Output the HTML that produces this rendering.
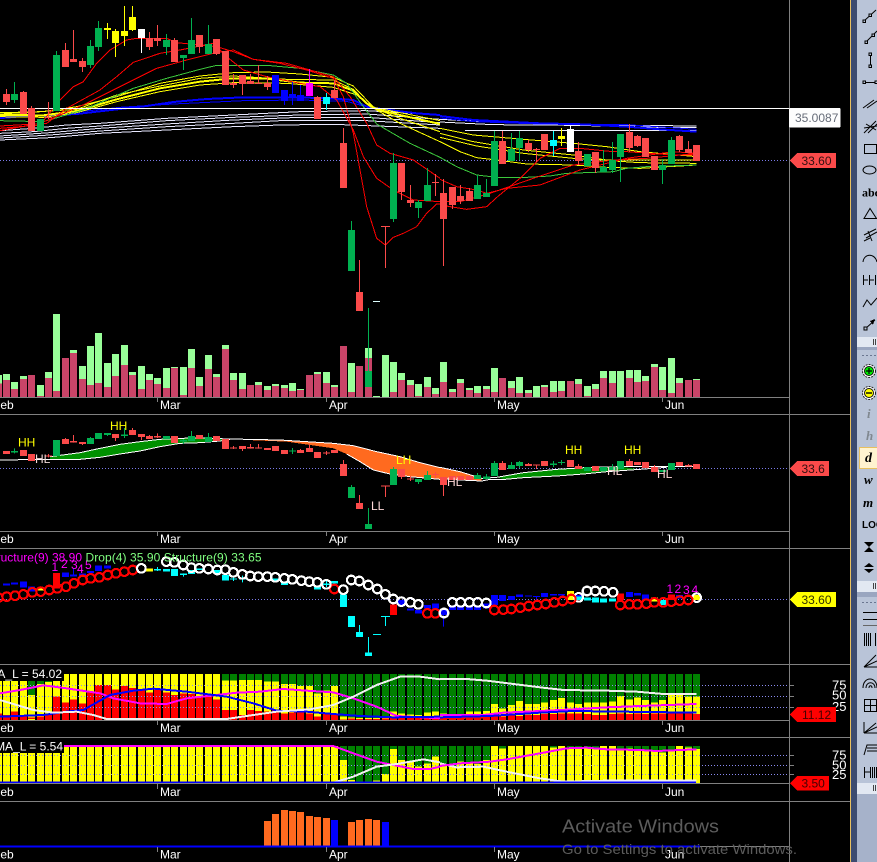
<!DOCTYPE html>
<html><head><meta charset="utf-8"><style>
html,body{margin:0;padding:0;background:#000;width:877px;height:862px;overflow:hidden}
svg{display:block}
text{font-family:"Liberation Sans",sans-serif;font-size:12px}
.w{fill:none;stroke-width:1}
.b{fill:none;stroke-width:7}
.l{fill:none;stroke-width:3}
</style></head><body>
<svg width="877" height="862" viewBox="0 0 877 862" xmlns="http://www.w3.org/2000/svg" shape-rendering="crispEdges">
<defs><path id="bars" d="M-1.5 0V1M6.5 0V1M14.5 0V1M23.5 0V1M31.5 0V1M40.5 0V1M48.5 0V1M56.5 0V1M65.5 0V1M73.5 0V1M82.5 0V1M90.5 0V1M98.5 0V1M107.5 0V1M115.5 0V1M124.5 0V1M132.5 0V1M141.5 0V1M149.5 0V1M157.5 0V1M166.5 0V1M174.5 0V1M183.5 0V1M191.5 0V1M199.5 0V1M208.5 0V1M216.5 0V1M225.5 0V1M233.5 0V1M242.5 0V1M250.5 0V1M258.5 0V1M267.5 0V1M275.5 0V1M284.5 0V1M292.5 0V1M300.5 0V1M309.5 0V1M317.5 0V1M326.5 0V1M334.5 0V1M343.5 0V1M351.5 0V1M359.5 0V1M368.5 0V1M376.5 0V1M385.5 0V1M393.5 0V1M401.5 0V1M410.5 0V1M418.5 0V1M427.5 0V1M435.5 0V1M443.5 0V1M452.5 0V1M460.5 0V1M469.5 0V1M477.5 0V1M486.5 0V1M494.5 0V1M502.5 0V1M511.5 0V1M519.5 0V1M528.5 0V1M536.5 0V1M544.5 0V1M553.5 0V1M561.5 0V1M570.5 0V1M578.5 0V1M587.5 0V1M595.5 0V1M603.5 0V1M612.5 0V1M620.5 0V1M629.5 0V1M637.5 0V1M645.5 0V1M654.5 0V1M662.5 0V1M671.5 0V1M679.5 0V1M688.5 0V1M696.5 0V1"/></defs>
<rect width="877" height="862" fill="#000"/>

<!-- dotted price lines -->
<path d="M0 160.5H789M0 468.5H789M0 599.5H789" stroke="#7a7ae8" stroke-dasharray="1 2" fill="none"/>

<!-- main MAs, left part -->
<g transform="scale(.33333)">
<path class="l" stroke="#e8e8ff" d="M0 392L100 385L200 375L300 370L500 355L700 345L900 335L1100 332L1320 345M0 400L100 395L200 385L300 378L500 362L700 352L900 345L1100 342L1320 358M0 408L150 398L300 385L500 372L700 360L900 352L1100 352L1320 368M0 414L150 405L300 393L500 380L700 370L840 362L1100 362L1320 375M0 420L150 413L300 400L500 390L700 380L840 375L1000 373L1320 385"/>
<path fill="none" stroke="#00f" stroke-width="6" d="M0 352L230 342L360 327L440 318L520 306L620 297L730 292L900 292L1000 296L1060 300L1100 320L1150 328L1250 340L1320 345"/>
<path class="l" stroke="#00f" d="M0 356L230 336L360 322L520 312L730 302L900 300L1040 304L1090 318"/>
<path class="l" stroke="#ff0" d="M0 338L130 335L230 320L350 290L480 250L600 228L700 218L800 216L900 222L1000 232L1060 258L1100 300L1130 330L1200 370L1320 425"/>
<path fill="none" stroke="#ff0" stroke-width="6" d="M0 345L130 346L230 333L350 298L480 265L600 245L700 235L800 236L900 248L1000 250L1060 272L1100 310L1130 328L1200 345L1320 372"/>
<path class="l" stroke="#ff0" d="M0 350L130 352L230 338L350 305L480 275L600 255L700 248L860 250L1000 262L1070 285L1110 320L1200 355L1320 395M0 342L230 328L350 285L480 258L600 235L700 228L860 238L1000 240L1060 268L1110 320L1200 338L1320 362"/>
<path class="l" stroke="#3cc83c" d="M0 362L130 365L250 330L330 295L400 265L500 235L600 208L650 196L800 196L900 205L1000 225L1040 250L1090 320L1130 372L1230 430L1320 472"/>
<path class="l" stroke="#f00" d="M0 385L120 375L180 300L220 260L250 245L290 190L330 150L380 120L410 115L500 115L530 128L600 135L650 140L700 155L760 178L840 190L920 210L1000 235L1030 290L1060 400L1100 620L1130 715L1156 735L1180 712L1210 700L1250 680L1280 640L1310 612L1320 612"/>
<path class="l" stroke="#f00" d="M0 378L140 370L200 325L300 270L350 230L400 187L480 160L540 150L640 130L680 170L730 210L800 230L900 250L960 260L1010 300L1060 390L1090 470L1130 535L1180 570L1240 600L1320 605"/>
<path class="l" stroke="#f00" d="M0 392L120 370L180 345L260 310L340 270L400 240L470 205L560 180L640 160L700 150L760 178L860 190L1000 230L1050 290L1100 370L1130 435L1170 460L1240 480L1320 535"/>
</g>
<!-- main MAs, right part -->
<g transform="translate(440,90) scale(.33333)">
<path class="l" stroke="#f0f0ff" d="M0 88L75 92L250 100L480 105L770 108M0 96L160 104L400 106L660 112L770 112M75 122L770 122"/>
<path fill="none" stroke="#00f" stroke-width="6" d="M0 78L100 90L300 100L430 103L560 110L660 118L770 125"/>
<path class="l" stroke="#00f" d="M0 84L100 95L300 102L560 104L770 118"/>
<path class="l" stroke="#ff0" d="M0 115L100 135L250 148L400 160L500 170L600 185L770 200"/>
<path class="l" stroke="#ff0" d="M0 130L100 155L250 180L400 195L500 210L770 210"/>
<path class="l" stroke="#ff0" d="M0 155L60 185L110 203L170 210L260 222L400 225L500 232L600 235L770 225M0 142L110 168L250 190L400 205L600 218L770 220"/>
<path class="l" stroke="#3cc83c" d="M0 202L50 230L110 255L170 262L260 262L330 258L380 250L520 245L560 235L620 230L770 225"/>
<path class="l" stroke="#f00" d="M0 268L50 290L110 300L140 310L200 295L300 285L420 240L560 205L700 185L770 190"/>
<path class="l" stroke="#f00" d="M0 345L80 358L140 350L175 318L240 265L300 205L360 175L420 175L520 185L560 185L700 195L770 195"/>
<path class="l" stroke="#f00" d="M0 335L60 335L150 310L280 265L400 225L520 210L620 205L770 190"/>
</g>
<path d="M0 108.5H789" stroke="#fff" fill="none"/>

<!-- main candles -->
<path class="w" stroke="#fb4a4a" d="M6.5 89V105M23.5 91V114M31.5 106V131M48.5 102V119M65.5 43V67M73.5 30V62M82.5 58V72M149.5 32V50M157.5 25V46M174.5 38V62M199.5 35V53M216.5 39V55M233.5 74V88M242.5 75V95M250.5 74V84M258.5 65V84M267.5 76V90M317.5 96V119M334.5 80V98M343.5 128V188M359.5 260V311M385.5 227V268M401.5 163V200M410.5 185V207M435.5 174V196M443.5 179V266M452.5 187V209M460.5 185V204M469.5 188V201M502.5 131V164M528.5 140V152M536.5 148V162M544.5 134V150M578.5 142V165M595.5 152V173M629.5 124V152M637.5 135V147M645.5 138V157M654.5 156V170M679.5 135V152M688.5 141V153M696.5 145V161"/>
<path class="b" stroke="#fb4a4a" d="M6.5 94V102M23.5 92V114M31.5 108V131M48.5 117V118M65.5 50V67M73.5 59V62M82.5 61V67M149.5 38V47M157.5 38V41M174.5 40V62M199.5 35V47M216.5 39V54M225.5 51V85M233.5 83V85M242.5 75V84M250.5 81V84M258.5 83V84M267.5 83V87M317.5 97V119M334.5 90V98M343.5 143V188M359.5 292V311M401.5 163V192M410.5 200V203M435.5 182V183M443.5 193V219M452.5 187V205M460.5 196V201M469.5 191V201M502.5 141V164M528.5 143V150M536.5 149V150M544.5 134V150M578.5 151V161M595.5 152V168M629.5 132V148M637.5 136V146M645.5 138V157M654.5 156V170M679.5 136V150M688.5 149V153M696.5 145V161"/>
<path d="M381 226.5H390" stroke="#fb4a4a" fill="none"/>
<path class="w" stroke="#00b050" d="M14.5 82V103M56.5 51V111M90.5 40V68M98.5 21V51M166.5 34V55M183.5 55V70M191.5 18V54M208.5 25V54M351.5 221V271M393.5 153V222M418.5 200V218M427.5 168V201M477.5 175V199M486.5 179V197M494.5 131V186M511.5 133V161M519.5 131V160M603.5 150V172M612.5 142V173M620.5 134V182M662.5 159V184M671.5 137V164M368.5 308V387"/>
<path class="b" stroke="#00b050" d="M14.5 94V100M40.5 119V131M56.5 55V111M90.5 46V65M98.5 28V47M166.5 40V47M183.5 55V58M191.5 40V54M208.5 44V54M351.5 230V271M393.5 163V219M418.5 202V208M427.5 185V201M477.5 185V199M486.5 193V197M494.5 141V186M511.5 149V161M519.5 138V148M587.5 154V166M603.5 167V172M612.5 160V170M620.5 134V157M662.5 165V170M671.5 140V164M368.5 371V387"/>
<path class="w" stroke="#ff0" d="M107.5 23V39M115.5 29V57M124.5 6V46M132.5 6V31M561.5 128V146"/>
<path class="b" stroke="#ff0" d="M107.5 28V30M115.5 31V43M124.5 31V36M132.5 17V30M561.5 136V139"/>
<path class="w" stroke="#fff" d="M141.5 29V53M570.5 125V152"/>
<path class="b" stroke="#fff" d="M141.5 29V38M570.5 129V152"/>
<path class="w" stroke="#00f" d="M284.5 90V105M292.5 82V105M300.5 85V101"/>
<path class="b" stroke="#00f" d="M275.5 75V93M284.5 90V101M292.5 94V97M300.5 95V101"/>
<path class="w" stroke="#f0f" d="M309.5 69V96"/>
<path class="b" stroke="#f0f" d="M309.5 83V96"/>
<path class="w" stroke="#0ff" d="M326.5 93V110M553.5 131V156"/>
<path class="b" stroke="#0ff" d="M326.5 97V104M553.5 140V146"/>
<path d="M373 301.5H380" stroke="#dff" fill="none"/>

<!-- volume -->
<g transform="translate(0,300) scale(1,.33333)">
<path class="b" stroke="#9f9" d="M-1.5 225V292M6.5 222V292M14.5 246V292M23.5 228V292M40.5 255V292M48.5 216V292M56.5 42V292M73.5 150V292M82.5 198V292M90.5 138V292M98.5 99V292M107.5 189V292M115.5 162V292M124.5 135V292M132.5 216V292M141.5 198V292M149.5 222V292M157.5 234V292M166.5 204V292M174.5 201V292M183.5 201V292M191.5 147V292M199.5 231V292M208.5 165V292M216.5 222V292M225.5 135V292M233.5 219V292M242.5 219V292M258.5 246V292M267.5 258V292M275.5 252V292M284.5 255V292M292.5 249V292M300.5 267V292M317.5 216V292M326.5 216V292M334.5 255V292M351.5 189V292M368.5 144V292M376.5 288V292M385.5 165V292M393.5 186V292M401.5 219V292M410.5 240V292M418.5 252V292M427.5 231V292M435.5 264V292"/>
<path class="b" stroke="#c94468" d="M-1.5 250V292M6.5 240V292M14.5 267V292M23.5 237V292M31.5 225V292M40.5 288V292M48.5 234V292M56.5 273V292M65.5 174V292M73.5 159V292M82.5 237V292M90.5 255V292M98.5 249V292M107.5 261V292M115.5 228V292M124.5 195V292M132.5 225V292M141.5 267V292M149.5 240V292M157.5 252V292M166.5 264V292M174.5 204V292M183.5 285V292M191.5 204V292M199.5 258V292M208.5 207V292M216.5 231V292M225.5 147V292M233.5 240V292M242.5 267V292M250.5 255V292M258.5 255V292M267.5 270V292M275.5 258V292M284.5 264V292M292.5 273V292M300.5 270V292M309.5 225V292M317.5 222V292M326.5 249V292M334.5 261V292M343.5 138V292M351.5 276V292M359.5 198V292M368.5 174V292M393.5 276V292M401.5 240V292M410.5 255V292M418.5 288V292M427.5 261V292M435.5 282V292"/>
</g>
<g transform="translate(0,350) scale(1,.33333)">
<path class="b" stroke="#9f9" d="M443.5 36V141M452.5 117V141M460.5 87V141M469.5 114V141M477.5 108V141M486.5 108V141M494.5 54V141M511.5 93V141M519.5 81V141M528.5 120V141M536.5 108V141M544.5 105V141M553.5 93V141M561.5 93V141M578.5 87V141M587.5 108V141M595.5 102V141M603.5 63V141M612.5 63V141M620.5 63V141M629.5 60V141M637.5 60V141M645.5 78V141M654.5 42V141M662.5 51V141M671.5 24V141M679.5 84V141M696.5 87V141"/>
<path class="b" stroke="#c94468" d="M443.5 96V141M452.5 126V141M460.5 99V141M469.5 120V141M477.5 129V141M486.5 117V141M494.5 126V141M502.5 84V141M511.5 114V141M519.5 129V141M528.5 129V141M544.5 111V141M553.5 126V141M561.5 123V141M570.5 93V141M578.5 102V141M587.5 138V141M595.5 117V141M603.5 84V141M612.5 99V141M629.5 84V141M637.5 96V141M645.5 93V141M654.5 51V141M662.5 120V141M671.5 129V141M679.5 99V141M688.5 90V141M696.5 90V141"/>
</g>
<path class="w" stroke="#00b050" d="M368.5 308V371"/>
<path class="b" stroke="#00b050" d="M368.5 371V387"/>
<path class="b" stroke="#fb4a4a" d="M359.5 292V311"/>

<!-- panel 2 ribbon -->
<g transform="translate(0,300) scale(.33333)">
<path fill="#009000" d="M150 470L240 458L300 445L360 433L420 425L480 418L540 415L600 414L690 417L660 423L600 428L540 430L480 440L420 453L360 462L300 472L240 478L150 478Z"/>
<path fill="#ff6a1f" d="M740 420L840 420L1000 430L1060 437L1130 455L1200 470L1260 488L1320 503V538L1230 530L1170 522L1120 510L1080 485L1040 462L1000 445L860 425Z"/>
<path class="l" stroke="#fff" d="M0 480L150 478L240 478L300 472L360 462L420 453L480 440L540 430L600 428L660 423L690 418"/>
<path class="l" stroke="#fff" d="M150 470L240 458L300 445L360 433L420 425L480 418L540 415L600 414L690 417L840 420L1000 430L1060 437L1130 455L1200 470L1260 488L1320 503"/>
<path class="l" stroke="#fff" d="M1040 462L1080 485L1120 510L1170 522L1230 530L1320 538"/>
</g>
<g transform="translate(440,350) scale(.33333)">
<path fill="#ff6a1f" d="M0 352L60 365L125 385L125 395L60 390L0 385Z"/>
<path fill="#009000" d="M170 382L250 368L350 358L450 352L540 350L600 358L500 365L430 372L350 378L250 383L195 388Z"/>
<path class="l" stroke="#fff" d="M0 352L60 365L125 385L170 382L250 368L350 358L450 352L540 350L770 350"/>
<path class="l" stroke="#fff" d="M0 385L60 390L125 393L150 388L195 388L250 383L350 378L430 372L500 365L600 358L680 352"/>
</g>
<!-- panel 2 candles -->
<g transform="translate(0,300) scale(1,.33333)">
<path class="w" stroke="#fb4a4a" d="M48.5 462V472M65.5 414V432M73.5 405V428M82.5 426V435M115.5 402V423M124.5 384V405M132.5 384V405M141.5 402V420M149.5 405V417M157.5 400V414M233.5 438V447M242.5 438V453M250.5 432V446M258.5 432V446M300.5 447V459M309.5 432V456M326.5 453V465M343.5 480V528M359.5 585V627M385.5 558V591M401.5 507V537M410.5 528V543M435.5 516V535"/>
<path class="b" stroke="#fb4a4a" d="M6.5 453V462M23.5 450V468M31.5 462V483M48.5 466V469M65.5 417V432M73.5 423V428M82.5 426V432M115.5 402V414M132.5 390V405M141.5 402V411M149.5 408V417M157.5 408V412M174.5 408V429M199.5 405V417M216.5 408V423M225.5 417V447M233.5 443V446M242.5 438V447M250.5 441V446M258.5 443V446M267.5 444V450M275.5 438V453M284.5 450V462M300.5 450V459M309.5 444V456M317.5 456V474M326.5 458V461M334.5 450V459M343.5 492V528M359.5 609V627M401.5 507V531M410.5 535V538M435.5 522V525"/>
<path d="M381 558.5H390" stroke="#fb4a4a" stroke-width="3" fill="none"/>
<path class="w" stroke="#00b050" d="M14.5 445V460M90.5 411V432M107.5 399V408M124.5 384V414M183.5 417V432M191.5 393V423M208.5 399V426M292.5 444V462M351.5 555V594M368.5 624V687M393.5 501V555M418.5 537V552M427.5 513V540"/>
<path class="b" stroke="#00b050" d="M14.5 453V458M56.5 420V468M90.5 414V432M98.5 399V417M107.5 399V405M124.5 403V408M166.5 408V417M183.5 420V425M191.5 408V423M208.5 411V426M292.5 452V455M351.5 561V594M368.5 672V687M393.5 507V555M418.5 537V546M427.5 525V540"/>
</g>
<g transform="translate(0,350) scale(1,.33333)">
<path class="w" stroke="#fb4a4a" d="M443.5 381V438M502.5 333V360M528.5 339V348M536.5 345V357M578.5 342V357M595.5 348V363M629.5 327V348M654.5 345V366M688.5 342V350"/>
<path class="b" stroke="#fb4a4a" d="M443.5 381V405M452.5 378V390M460.5 378V390M469.5 378V390M502.5 339V360M528.5 342V348M544.5 333V348M570.5 330V351M578.5 348V357M595.5 348V363M629.5 333V348M637.5 336V345M645.5 336V354M654.5 351V366M679.5 336V348M688.5 345V350M696.5 342V357"/>
<path d="M533 345.5H540" stroke="#fb4a4a" stroke-width="3" fill="none"/>
<path class="w" stroke="#00b050" d="M477.5 369V387M486.5 372V387M494.5 333V378M511.5 336V357M519.5 333V354M553.5 333V351M561.5 330V345M612.5 342V360"/>
<path class="b" stroke="#00b050" d="M477.5 375V387M486.5 380V387M494.5 339V378M511.5 345V357M519.5 336V348M553.5 340V345M561.5 336V339M587.5 351V363M603.5 351V363M612.5 351V360M620.5 333V357M662.5 360V366M671.5 339V360"/>
</g>
<g>
<text x="18" y="446.5" fill="#ff0">HH</text>
<text x="110" y="430" fill="#ff0">HH</text>
<text x="35" y="463" fill="#f0d8d8">HL</text>
<text x="396" y="464" fill="#ff0">LH</text>
<text x="371" y="510" fill="#ffd8d8">LL</text>
<text x="447" y="486" fill="#ffd8d8">HL</text>
<text x="565" y="454" fill="#ff0">HH</text>
<text x="624" y="454" fill="#ff0">HH</text>
<text x="607" y="475" fill="#ffd8d8">HL</text>
<text x="657" y="478" fill="#ffd8d8">HL</text>
</g>

<!-- panel 3 candles -->
<g transform="translate(0,545) scale(1,.33333)">
<path class="b" stroke="#00f" d="M6.5 115V122M14.5 113V118M23.5 110V127M31.5 125V140M65.5 82V96M73.5 88V94M82.5 85V95M90.5 78V84M98.5 62V78M107.5 62V70M401.5 165V185M410.5 190V196M418.5 195V205M427.5 180V190M435.5 175V190"/>
<path class="w" stroke="#00f" d="M73.5 70V94"/>
<path class="b" stroke="#ff0" d="M40.5 130V136M149.5 70V80"/>
<path class="b" stroke="#f00" d="M56.5 84V130M393.5 178V210"/>
<path class="b" stroke="#0ff" d="M157.5 72V76M166.5 72V80M174.5 72V93M183.5 85V90M191.5 75V87M199.5 70V75M216.5 75V85M225.5 90V106M233.5 100V103M242.5 100V104M275.5 100V110M284.5 110V120M317.5 122V133M326.5 115V120M334.5 108V116M343.5 148V186M351.5 213V246M359.5 261V276M368.5 322V333"/>
<path class="w" stroke="#0ff" d="M157.5 66V78M183.5 85V95M233.5 92V108M242.5 92V112M326.5 106V126M359.5 240V276M368.5 276V333M385.5 213V243"/>
</g>
<path d="M373 634.5H381M381 616.5H390" stroke="#0ff" fill="none"/>
<g transform="translate(0,545) scale(1,.33333)">
<path class="b" stroke="#00f" d="M443.5 195V210M452.5 185V195M460.5 185V195M469.5 185V195M477.5 185V195M486.5 175V190M494.5 150V180M502.5 150V168M511.5 153V165M519.5 148V156M528.5 151V155M544.5 144V156M553.5 147V152M561.5 147V152M578.5 150V165M629.5 141V156M637.5 144V152M645.5 148V165M679.5 150V160M688.5 150V156"/>
<path class="w" stroke="#00f" d="M443.5 195V245M536.5 155V165"/>
<path d="M533 155H540" stroke="#00f" stroke-width="3" fill="none"/>
<path class="b" stroke="#ff0" d="M570.5 138V165M654.5 157V170M696.5 150V165"/>
<path class="b" stroke="#0ff" d="M578.5 155V165M587.5 157V167M595.5 157V172M603.5 160V172M612.5 160V170M662.5 165V180"/>
<path class="b" stroke="#f00" d="M620.5 145V165M671.5 148V165"/>
</g>
<g fill="#f0f">
<text x="51.5" y="571">1</text><text x="61" y="568">2</text><text x="71" y="569">3</text><text x="77" y="573">4</text><text x="85" y="569">5</text>
<text x="666.5" y="593">1</text><text x="674.5" y="593">2</text><text x="683" y="594">3</text><text x="691.5" y="594">4</text>
</g>
<!-- rings -->
<g transform="translate(0,545) scale(.33333)" fill="none" stroke-width="6.5">
<g stroke="#f00">
<circle cx="-5" cy="158" r="13"/><circle cx="20" cy="155" r="13"/><circle cx="45" cy="152" r="13"/><circle cx="70" cy="148" r="13"/><circle cx="97" cy="142" r="13"/><circle cx="122" cy="140" r="13"/><circle cx="148" cy="135" r="13"/><circle cx="172" cy="130" r="13"/><circle cx="198" cy="125" r="13"/><circle cx="222" cy="115" r="13"/><circle cx="248" cy="105" r="13"/><circle cx="272" cy="100" r="13"/><circle cx="298" cy="97" r="13"/><circle cx="323" cy="90" r="13"/><circle cx="348" cy="85" r="13"/><circle cx="373" cy="80" r="13"/><circle cx="398" cy="75" r="13"/><circle cx="1003" cy="132" r="13"/><circle cx="1282" cy="205" r="13"/><circle cx="1306" cy="205" r="13"/>
</g>
<g stroke="#fff">
<circle cx="424" cy="70" r="13"/><circle cx="499" cy="50" r="13"/><circle cx="523" cy="52" r="13"/><circle cx="550" cy="60" r="13"/><circle cx="574" cy="68" r="13"/><circle cx="598" cy="70" r="13"/><circle cx="625" cy="72" r="13"/><circle cx="652" cy="75" r="13"/><circle cx="676" cy="74" r="13"/><circle cx="700" cy="82" r="13"/><circle cx="727" cy="88" r="13"/><circle cx="751" cy="93" r="13"/><circle cx="775" cy="95" r="13"/><circle cx="802" cy="95" r="13"/><circle cx="826" cy="97" r="13"/><circle cx="853" cy="100" r="13"/><circle cx="877" cy="103" r="13"/><circle cx="904" cy="107" r="13"/><circle cx="928" cy="110" r="13"/><circle cx="952" cy="112" r="13"/><circle cx="979" cy="118" r="13"/><circle cx="1030" cy="134" r="13"/><circle cx="1054" cy="105" r="13"/><circle cx="1078" cy="108" r="13"/><circle cx="1105" cy="120" r="13"/><circle cx="1132" cy="132" r="13"/><circle cx="1156" cy="148" r="13"/><circle cx="1180" cy="162" r="13"/><circle cx="1204" cy="170" r="13"/><circle cx="1231" cy="172" r="13"/><circle cx="1255" cy="178" r="13"/>
</g>
</g>
<g transform="translate(440,545) scale(.33333)" fill="none" stroke-width="6.5">
<g stroke="#fff">
<circle cx="12" cy="204" r="13"/><circle cx="37" cy="172" r="13"/><circle cx="62" cy="172" r="13"/><circle cx="88" cy="172" r="13"/><circle cx="113" cy="172" r="13"/><circle cx="139" cy="174" r="13"/><circle cx="416" cy="157" r="13"/><circle cx="441" cy="138" r="13"/><circle cx="466" cy="138" r="13"/><circle cx="492" cy="139" r="13"/><circle cx="519" cy="142" r="13"/><circle cx="770" cy="158" r="13"/>
</g>
<g stroke="#f00">
<circle cx="163" cy="195" r="13"/><circle cx="190" cy="194" r="13"/><circle cx="214" cy="192" r="13"/><circle cx="241" cy="188" r="13"/><circle cx="266" cy="183" r="13"/><circle cx="292" cy="180" r="13"/><circle cx="317" cy="177" r="13"/><circle cx="343" cy="172" r="13"/><circle cx="368" cy="168" r="13"/><circle cx="394" cy="162" r="13"/><circle cx="541" cy="180" r="13"/><circle cx="568" cy="178" r="13"/><circle cx="592" cy="178" r="13"/><circle cx="619" cy="176" r="13"/><circle cx="643" cy="172" r="13"/><circle cx="670" cy="172" r="13"/><circle cx="694" cy="170" r="13"/><circle cx="719" cy="167" r="13"/><circle cx="745" cy="165" r="13"/>
</g>
</g>
<text x="82" y="561.5" fill="#f0f" text-anchor="end">Structure(9) 38.90</text>
<text x="85.5" y="561.5" fill="#80ff80" textLength="176">Drop(4) 35.90 Structure(9) 33.65</text>

<!-- panel 4 bars -->
<use href="#bars" transform="translate(0,674) scale(1,46)" fill="none" stroke="#ff0" stroke-width="7"/>
<g transform="translate(0,660) scale(1,.33333)">
<path class="b" stroke="#008000" d="M23.5 42V62M31.5 42V105M40.5 42V72M48.5 42V66M225.5 42V62M233.5 42V62M242.5 42V60M250.5 42V60M258.5 42V60M267.5 42V65M275.5 42V65M284.5 42V72M292.5 42V72M300.5 42V78M309.5 42V78M317.5 42V100M326.5 42V92M334.5 42V78M343.5 42V170M351.5 42V172M359.5 42V174M368.5 42V174M376.5 42V174M385.5 42V172M393.5 42V155M401.5 42V160M410.5 42V163M418.5 42V165M427.5 42V158M435.5 42V155M443.5 42V160M452.5 42V165M460.5 42V162M469.5 42V155M477.5 42V155M486.5 42V153M494.5 42V132M502.5 42V145M511.5 42V135M519.5 42V123M528.5 42V132M536.5 42V132M544.5 42V128M553.5 42V120M561.5 42V114M570.5 42V128M578.5 42V132M587.5 42V128M595.5 42V128M603.5 42V128M612.5 42V125M620.5 42V108M629.5 42V118M637.5 42V113M645.5 42V120M654.5 42V128M662.5 42V120M671.5 42V103M679.5 42V105M688.5 42V110M696.5 42V110"/>
<path class="b" stroke="#f00" d="M-1.5 160V180M6.5 165V180M14.5 155V180M23.5 165V180M31.5 172V177M40.5 170V180M48.5 165V180M56.5 110V180M65.5 128V180M73.5 118V180M82.5 130V180M90.5 95V180M98.5 75V180M107.5 75V180M115.5 88V180M124.5 78V180M132.5 84V180M141.5 90V180M149.5 97V180M157.5 90V180M166.5 97V180M174.5 105V180M183.5 100V180M191.5 102V180M199.5 110V180M208.5 105V180M216.5 118V180M225.5 150V180M233.5 150V180M242.5 165V180M250.5 150V180M258.5 153V180M267.5 155V180M275.5 150V180M284.5 160V180M292.5 158V180M300.5 155V180M309.5 160V180M317.5 170V180M326.5 160V180M334.5 162V180M343.5 178V180M351.5 176V180M359.5 177V180M368.5 177V180M376.5 177V180M385.5 176V180M393.5 170V180M401.5 172V180M410.5 172V180M418.5 172V180M427.5 170V180M435.5 170V180M443.5 172V180M452.5 172V180M460.5 172V180M469.5 172V180M477.5 170V180M486.5 170V180M494.5 165V180M502.5 170V180M511.5 165V180M519.5 168V180M528.5 165V180M536.5 165V180M544.5 162V180M553.5 162V180M561.5 160V180M570.5 160V180M578.5 160V180M587.5 162V180M595.5 165V180M603.5 165V180M612.5 162V180M620.5 160V180M629.5 162V180M637.5 160V180M645.5 162V180M654.5 160V180M662.5 160V180M671.5 160V180M679.5 160V180M688.5 160V180M696.5 162V180"/>
</g>
<path d="M0 685.5H789M0 696.5H789M0 707.5H789" stroke="#8a8af0" stroke-dasharray="1 2" fill="none"/>
<g transform="translate(0,660) scale(.33333)" fill="none" stroke-width="6">
<path stroke="#f0f" d="M0 100L60 90L130 76L200 85L300 100L340 115L420 130L500 132L560 115L650 105L710 98L780 95L850 87L920 92L1000 97L1060 115L1130 140L1190 168L1320 175"/>
<path stroke="#00f" d="M0 170L130 165L200 155L250 150L330 105L400 92L460 86L560 95L680 110L760 130L830 152L920 155L1000 162L1080 168L1180 172L1320 170"/>
<path stroke="#f0f0f0" d="M0 120L50 135L100 150L160 158L230 155L280 165L320 177L680 177L760 165L830 155L930 148L1000 135L1060 110L1130 75L1200 50L1260 50L1320 58"/>
</g>
<g transform="translate(440,660) scale(.33333)" fill="none" stroke-width="6">
<path stroke="#f0f0f0" d="M0 57L80 57L140 62L220 72L300 82L370 90L500 92L590 95L670 102L770 102"/>
<path stroke="#f00" d="M0 175L130 172"/>
<path stroke="#f0f" d="M0 165L130 165L190 158L300 153L400 148L500 142L600 138L770 132"/>
<path stroke="#00f" d="M0 172L150 168L300 158L400 153L770 158"/>
</g>
<rect x="0" y="668" width="64" height="13" fill="#000"/>
<text x="62" y="678" fill="#fff" text-anchor="end">MA_L = 54.02</text>

<!-- panel 5 bars -->
<use href="#bars" transform="translate(0,746) scale(1,37)" fill="none" stroke="#ff0" stroke-width="7"/>
<g transform="translate(0,660) scale(1,.33333)">
<path class="b" stroke="#008000" d="M343.5 258V300M351.5 258V360M359.5 258V365M368.5 258V365M376.5 258V362M385.5 258V342M393.5 258V267M401.5 258V300M410.5 258V305M418.5 258V320M427.5 258V310M435.5 258V290M443.5 258V312M452.5 258V318M460.5 258V305M469.5 258V310M477.5 258V312M486.5 258V300M502.5 258V265M553.5 258V262M570.5 258V262M578.5 258V265M587.5 258V265M595.5 258V265M620.5 258V265M629.5 258V265M637.5 258V268M645.5 258V270M654.5 258V275M662.5 258V278M671.5 258V268M688.5 258V263M696.5 258V267"/>
</g>
<path d="M0 755.5H789M0 765.5H789M0 774.5H789" stroke="#8a8af0" stroke-dasharray="1 2" fill="none"/>
<g transform="translate(0,660) scale(.33333)" fill="none" stroke-width="6">
<path stroke="#f0f" d="M190 258H1000L1060 280L1130 305L1180 315L1240 327L1290 327L1320 320"/>
<path stroke="#f0f0f0" d="M1000 368L1060 350L1130 320L1190 312L1270 298L1320 307"/>
</g>
<g transform="translate(440,660) scale(.33333)" fill="none" stroke-width="6">
<path stroke="#f0f0f0" d="M0 310L50 322L130 320L200 335L300 355L370 365L500 362L770 362"/>
<path stroke="#f0f" d="M0 318L60 310L150 305L200 298L300 280L380 265L440 263L500 268L600 270L650 273L770 268"/>
</g>
<path d="M0 782.5H696" stroke="#00f" stroke-width="2" fill="none"/>
<rect x="0" y="740" width="64" height="13" fill="#000"/>
<text x="63" y="750.5" fill="#fff" text-anchor="end">MA_L = 5.54</text>

<!-- panel 6 -->
<g transform="translate(0,660) scale(1,.33333)">
<path class="b" stroke="#ff6a1f" d="M267.5 483V558M275.5 462V558M284.5 450V558M292.5 453V558M300.5 456V558M309.5 468V558M317.5 471V558M326.5 474V558M351.5 486V558M359.5 480V558M368.5 477V558M376.5 480V558"/>
<path class="b" stroke="#00f" d="M334.5 480V558M385.5 486V558"/>
</g>
<path d="M700 846.5H789" stroke="#808080" fill="none"/>
<path d="M0 846.5H700" stroke="#00f" stroke-width="2" fill="none"/>

<!-- axes -->
<g fill="none" stroke="#808080">
<path d="M789.5 0V862"/>
<path d="M0 397.5H789M0 531.5H789M0 720.5H789M0 783.5H789"/>
<path d="M0 414.5H850M0 548.5H850M0 664.5H850M0 737.5H850M0 801.5H850"/>
<path d="M157.5 397V402M326.5 397V402M494.5 397V402M662.5 397V402M157.5 531V536M326.5 531V536M494.5 531V536M662.5 531V536M157.5 720V725M326.5 720V725M494.5 720V725M662.5 720V725M157.5 784V789M326.5 784V789M494.5 784V789M662.5 784V789M157.5 847V852M326.5 847V852M494.5 847V852M662.5 847V852"/>
<path d="M789 685.5H794M789 696.5H794M789 707.5H794M789 755.5H794M789 765.5H794M789 774.5H794"/>
</g>
<g fill="#fff">
<text x="-7" y="409">Feb</text><text x="160" y="409">Mar</text><text x="329" y="409">Apr</text><text x="497" y="409">May</text><text x="665" y="409">Jun</text>
<text x="-7" y="543">Feb</text><text x="160" y="543">Mar</text><text x="329" y="543">Apr</text><text x="497" y="543">May</text><text x="665" y="543">Jun</text>
<text x="-7" y="732">Feb</text><text x="160" y="732">Mar</text><text x="329" y="732">Apr</text><text x="497" y="732">May</text><text x="665" y="732">Jun</text>
<text x="-7" y="796">Feb</text><text x="160" y="796">Mar</text><text x="329" y="796">Apr</text><text x="497" y="796">May</text><text x="665" y="796">Jun</text>
<text x="-7" y="858.5">Feb</text><text x="160" y="858.5">Mar</text><text x="329" y="858.5">Apr</text><text x="497" y="858.5">May</text><text x="665" y="858.5">Jun</text>
<text x="832" y="689.5" style="font-size:13px">75</text><text x="832" y="699.5" style="font-size:13px">50</text><text x="832" y="711" style="font-size:13px">25</text>
<text x="832" y="759.5" style="font-size:13px">75</text><text x="832" y="769.5" style="font-size:13px">50</text><text x="832" y="779" style="font-size:13px">25</text>
</g>

<!-- price labels -->
<rect x="789" y="108" width="51.5" height="19.5" rx="1.5" fill="#fdfdfd"/>
<text x="795" y="122" fill="#666c78">35.0087</text>
<path d="M790 160.5L797 153H836V168H797Z" fill="#fb4a4a"/><text x="801.5" y="165" fill="#301010">33.60</text>
<path d="M790 468.5L797 461H829V476H797Z" fill="#fb4a4a"/><text x="801.5" y="473" fill="#301010">33.6</text>
<path d="M790 599.5L797 592H836V607H797Z" fill="#ff0"/><text x="801.5" y="604" fill="#303000">33.60</text>
<path d="M790 714.5L797 707H836V722H797Z" fill="#f00"/><text x="802" y="719" fill="#400">11.12</text>
<path d="M790 783L797 776H829V790.5H797Z" fill="#f00"/><text x="801.5" y="787.5" fill="#400">3.50</text>

<!-- watermark -->
<g shape-rendering="auto">
<text x="562" y="832.5" fill="#5c5c5c" style="font-size:18px" textLength="157" lengthAdjust="spacingAndGlyphs">Activate Windows</text>
<text x="562" y="854" fill="#5c5c5c" style="font-size:14px" textLength="235" lengthAdjust="spacingAndGlyphs">Go to Settings to activate Windows.</text>
</g>

<!-- toolbar -->
<rect x="850" y="0" width="1" height="862" fill="#e8c060"/>
<rect x="851" y="0" width="6" height="862" fill="#3c4b70"/>
<rect x="857" y="0" width="20" height="862" fill="#b9c4d8"/>
<rect x="857" y="337" width="20" height="10" fill="#e2e8f2"/>
<rect x="857" y="347" width="20" height="3" fill="#9aa6c0"/>
<rect x="857" y="581" width="20" height="11" fill="#e2e8f2"/>
<rect x="857" y="592" width="20" height="5" fill="#9aa6c0"/>
<rect x="857" y="783" width="20" height="11" fill="#e2e8f2"/>
<rect x="857" y="794" width="20" height="68" fill="#a6b2ca"/>
<path d="M873.5 339V345M875.5 339V345M873.5 583V589M875.5 583V589M873.5 785V791M875.5 785V791" stroke="#444" fill="none"/>
<path d="M862 355.5H876M862 602.5H876" stroke="#6a7690" stroke-dasharray="2 2" fill="none"/>
<g fill="none" stroke="#000" shape-rendering="auto">
<path d="M864 21L876 10"/><rect x="863" y="20" width="2.5" height="2.5" fill="#b9c4d8"/><rect x="869" y="14" width="2.5" height="2.5" fill="#b9c4d8"/>
<path d="M866 42L877 31"/><rect x="865" y="41" width="2.5" height="2.5" fill="#b9c4d8"/><rect x="872" y="34" width="2.5" height="2.5" fill="#b9c4d8"/>
<path d="M870.5 55V66"/><rect x="869" y="53" width="2.5" height="2.5" fill="#b9c4d8"/><rect x="869" y="65" width="2.5" height="2.5" fill="#b9c4d8"/>
<path d="M864 82.5H877"/><rect x="863" y="81" width="2.5" height="2.5" fill="#b9c4d8"/><rect x="875" y="81" width="2.5" height="2.5" fill="#b9c4d8"/>
<path d="M863 108L874 100M867 108L877 101"/>
<path d="M864 133L876 121M868 133L877 124M866 124L876 130M864 128L877 126"/>
<rect x="864.5" y="144.5" width="12" height="9"/>
<ellipse cx="869.5" cy="170" rx="6.5" ry="4"/>
<path d="M864 218.5L870 208.5L876.5 218.5Z"/>
<path d="M864 235L876 229M866 238L877 232M868 231L872 241M864 241L870 238"/>
<path d="M863 262C864 253 875 253 877 262"/>
<path d="M863.5 275V285M869.5 275V285M875.5 275V285M864 280H868M870 280H874"/>
<path d="M863 307L867 300L871 305L877 298"/>
<path d="M865 329L875 320"/><rect x="864" y="327" width="3" height="3" fill="#b9c4d8"/>
<path d="M863 612.5H877M863 619.5H877"/>
<path d="M863 625.5H877" stroke="#666"/>
<path d="M864.5 633V646M866.5 633V646M868.5 633V646M870.5 633V646M875.5 633V646"/>
<path d="M864 667L876 655M864 667L877 661M864 667H877"/>
<path d="M863 688C863 676 877 676 877 688M866 688C866 681 875 681 875 688M869 688C869 685 872 685 872 688"/>
<rect x="864.5" y="699.5" width="12" height="12"/><path d="M864 705.5H877M870.5 699V712"/>
<path d="M864 733V722M864 733H877M864 733L876 723M864 733L877 727"/>
<path d="M864 755L867 745H877M867 748H877M867 751H877"/>
<path d="M864.5 767V778M870.5 767V778M864 772H870M872.5 767V778M874.5 767V778M876.5 767V778"/>
</g>
<path d="M875 319L870 321L873 325Z" fill="#000"/>
<text x="862" y="196.5" fill="#000" style="font-family:'Liberation Serif',serif;font-weight:bold;font-size:12px">abc</text>
<text x="867" y="418" fill="#808890" style="font-family:'Liberation Serif',serif;font-style:italic;font-weight:bold;font-size:13px">i</text>
<text x="866" y="440" fill="#808890" style="font-family:'Liberation Serif',serif;font-style:italic;font-weight:bold;font-size:13px">h</text>
<rect x="859.5" y="447.5" width="18" height="21" fill="#fff3d0" stroke="#e8c060"/>
<text x="865" y="462" fill="#000" style="font-family:'Liberation Serif',serif;font-style:italic;font-weight:bold;font-size:14px">d</text>
<text x="864" y="484" fill="#000" style="font-family:'Liberation Serif',serif;font-style:italic;font-weight:bold;font-size:13px">w</text>
<text x="863" y="507" fill="#000" style="font-family:'Liberation Serif',serif;font-style:italic;font-weight:bold;font-size:13px">m</text>
<text x="862" y="528" fill="#000" style="font-weight:bold;font-size:10px">LOG</text>
<g shape-rendering="auto">
<circle cx="869" cy="371" r="6.5" fill="#fff" stroke="#222" stroke-dasharray="2 1"/>
<circle cx="869" cy="371" r="4.5" fill="#0e0" stroke="#111"/>
<path d="M866 371H872M869 368V374" stroke="#000" fill="none" stroke-width="1.2"/>
<circle cx="869" cy="393" r="6.5" fill="#fff" stroke="#222" stroke-dasharray="2 1"/>
<circle cx="869" cy="393" r="4.5" fill="#ff0" stroke="#111"/>
<path d="M866 393H872" stroke="#000" fill="none" stroke-width="1.4"/>
<path d="M864 542H874L869 547ZM869 547L874 552H864Z" fill="#000"/>
<path d="M869 563L874 567H864ZM864 569H874L869 573Z" fill="#000"/>
</g>
</svg>
</body></html>
